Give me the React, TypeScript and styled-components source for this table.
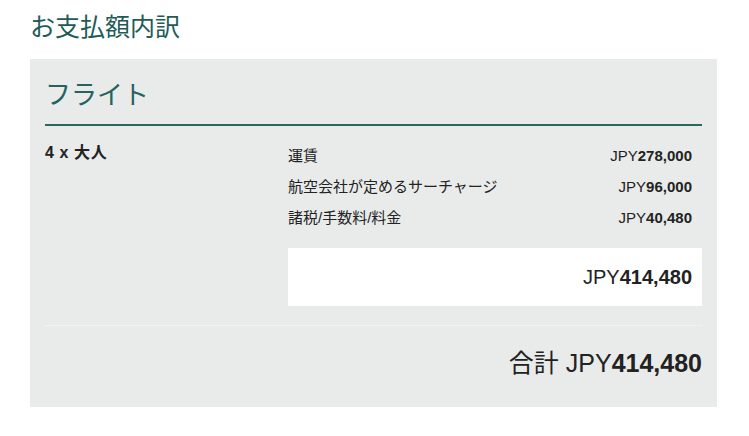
import React, { FC } from 'react';
import styled, { createGlobalStyle } from 'styled-components';

const GlobalStyle = createGlobalStyle`
  body {
    margin: 0;
    background: #fff;
    font-family: "Liberation Sans", "Noto Sans CJK JP", sans-serif;
    color: #222;
  }
`;

const Page = styled.div`
  padding: 10px 32px 0 30px;
  width: 749px;
  box-sizing: border-box;
`;

const Heading = styled.h2`
  margin: 0 0 15px 0;
  font-size: 25px;
  line-height: 34px;
  font-weight: normal;
  color: #1f5c58;
`;

const Panel = styled.section`
  background: #e9ebea;
  padding: 20px 15px 27px 15px;
`;

const SectionTitle = styled.h3`
  margin: 0;
  padding: 0 0 13px 0;
  font-size: 26px;
  line-height: 32px;
  font-weight: normal;
  color: #246360;
  border-bottom: 2px solid #2a6662;
`;

const Body = styled.div`
  display: grid;
  grid-template-columns: 243px 1fr;
  padding-top: 14px;
`;

const Pax = styled.div`
  font-size: 16px;
  font-weight: bold;
  line-height: 26px;
  letter-spacing: 0.6px;
`;

const Lines = styled.div`
  display: flex;
  flex-direction: column;
`;

const Line = styled.div`
  display: flex;
  justify-content: space-between;
  font-size: 15px;
  line-height: 31px;
  padding-right: 10px;
  color: #222;
`;

const Amount = styled.span`
  b {
    font-weight: bold;
  }
`;

const SubTotal = styled.div`
  margin-top: 15px;
  height: 58px;
  background: #fff;
  display: flex;
  align-items: center;
  justify-content: flex-end;
  padding-right: 10px;
  font-size: 20px;
`;

const Divider = styled.hr`
  margin: 19px 0 0 0;
  border: 0;
  border-top: 1px dotted #fafafa;
  height: 0;
`;

const Total = styled.div`
  margin-top: 20px;
  text-align: right;
  font-size: 25px;
  line-height: 34px;
`;

const Price: FC<{ value: string }> = ({ value }) => (
  <Amount>JPY<b>{value}</b></Amount>
);

const items = [
  { label: '運賃', value: '278,000' },
  { label: '航空会社が定めるサーチャージ', value: '96,000' },
  { label: '諸税/手数料/料金', value: '40,480' },
];

const App: FC = () => (
  <>
    <GlobalStyle />
    <Page>
      <Heading>お支払額内訳</Heading>
      <Panel>
        <SectionTitle>フライト</SectionTitle>
        <Body>
          <Pax>4 x 大人</Pax>
          <Lines>
            {items.map((it) => (
              <Line key={it.label}>
                <span>{it.label}</span>
                <Price value={it.value} />
              </Line>
            ))}
            <SubTotal>
              <Price value="414,480" />
            </SubTotal>
          </Lines>
        </Body>
        <Divider />
        <Total>
          合計 <Price value="414,480" />
        </Total>
      </Panel>
    </Page>
  </>
);

export default App;
